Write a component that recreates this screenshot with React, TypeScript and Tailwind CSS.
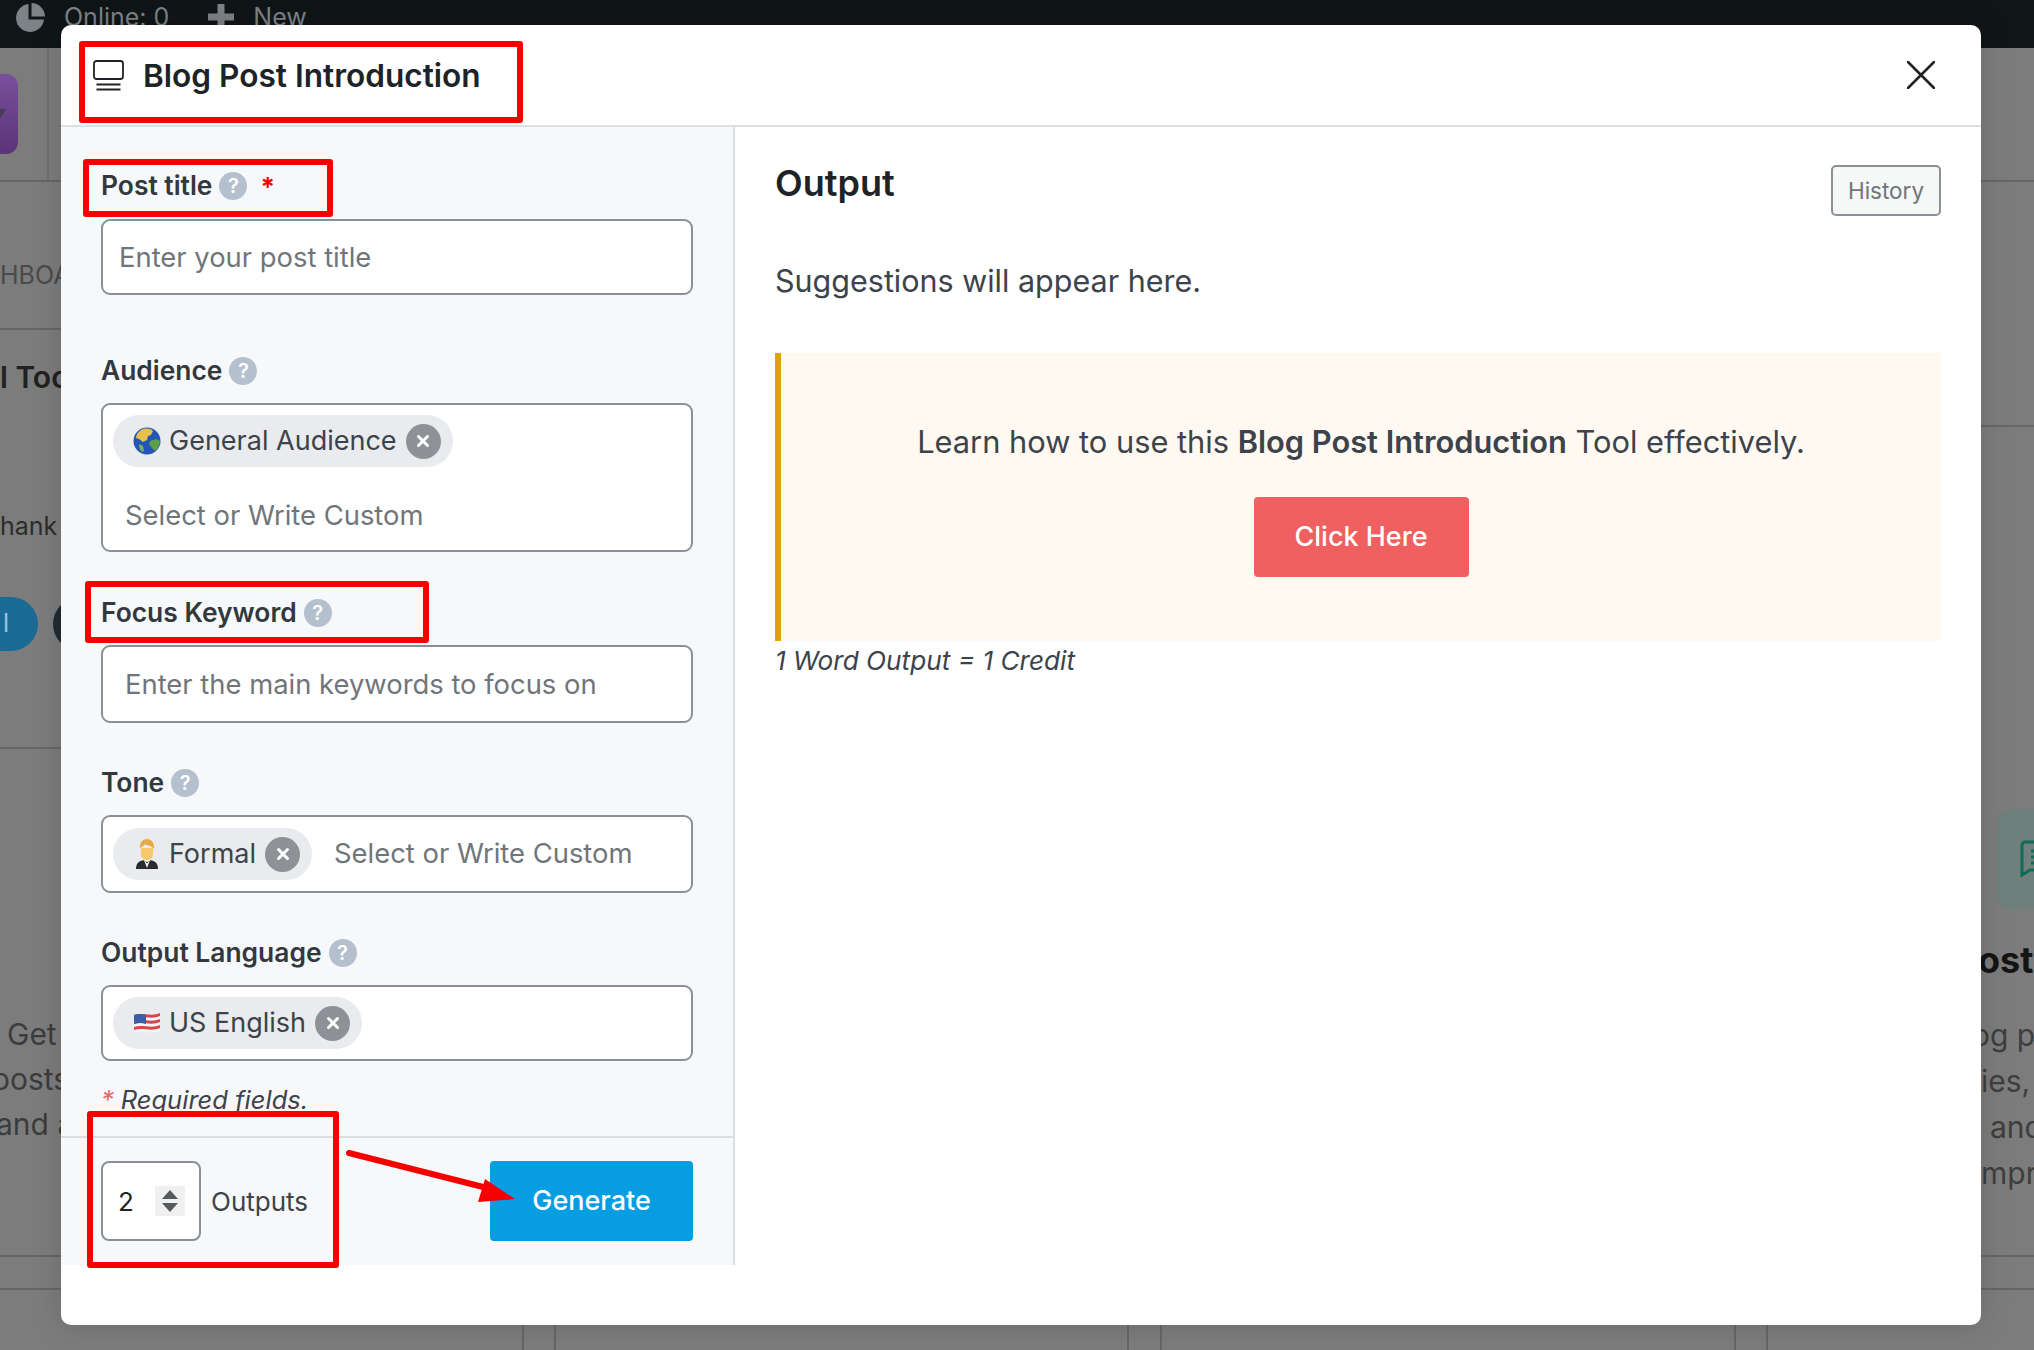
import React from "react";

const Help = () => (
  <span className="flex h-7 w-7 shrink-0 items-center justify-center rounded-full bg-[#b4c0cd] text-[20px] font-semibold text-white">
    ?
  </span>
);

const FieldLabel: React.FC<{ text: string; required?: boolean }> = ({ text, required }) => (
  <div className="flex h-7 items-center gap-[7px] text-[26.4px] font-semibold text-[#32383e]">
    <span>{text}</span>
    <Help />
    {required && <span className="ml-[6px] text-[26px] font-bold text-[#f00000]">*</span>}
  </div>
);

const Globe = () => (
  <svg viewBox="0 0 28 28" className="h-[28px] w-[28px] shrink-0">
    <circle cx="14" cy="14" r="13.5" fill="#2456b8" />
    <path d="M8 3c4-2 9-2 12 1l-2 4-3 1-1 4-4 2-4-3-3-1c0-3 2-6 5-8z" fill="#e3c14b" />
    <path d="M17 14l6-2 4 2c0 4-2 8-5 10l-3-3-3-4z" fill="#5aa04a" />
    <path d="M6 17l4 2 1 5-2 1c-2-2-3-5-3-8z" fill="#7ab356" />
  </svg>
);

const Man = () => (
  <svg viewBox="0 0 22 30" className="h-[30px] w-[22px] shrink-0">
    <path d="M0 30c0-6 3-9 11-9s11 3 11 9z" fill="#2b2b2b" />
    <path d="M8 21h6l-3 8z" fill="#fff" />
    <path d="M9 22l2 1 2-1-2 2.500z" fill="#222" />
    <path d="M5 9h12v6c0 4-3 6-6 6s-6-2-6-6z" fill="#f9c86a" />
    <path d="M4 10c-1-6 3-10 7-10s8 4 7 10l-2-2c-2-2-5-1-7-3-1 2-4 2-5 5z" fill="#e9a93c" />
  </svg>
);

const Flag = () => (
  <svg viewBox="0 0 26 24" className="h-[24px] w-[26px] shrink-0">
    <path d="M0 4c8-3 17 2 26-2v18c-9 4-18-1-26 2z" fill="#f3f3f3" />
    <path d="M0 4c8-3 17 2 26-2v3c-9 4-18-1-26 2zM0 10c8-3 17 2 26-2v3c-9 4-18-1-26 2zM0 16c8-3 17 2 26-2v3c-9 4-18-1-26 2z" fill="#d8454b" />
    <path d="M0 4c4-1.500 8-1 12 0v9c-4-1-8-1.500-12 0z" fill="#3a5da8" />
  </svg>
);

const Chip: React.FC<{ icon: React.ReactNode; text: string }> = ({ icon, text }) => (
  <div className="flex h-[52px] shrink-0 items-center rounded-full bg-[#e9ebee] pr-[12px]">
    <span className="flex w-[56px] shrink-0 justify-center pl-[11px]">{icon}</span>
    <span className="pt-[1px] text-[27px] text-[#3c434a]">{text}</span>
    <span className="ml-[9px] flex h-[35px] w-[35px] items-center justify-center rounded-full bg-[#8e9196]">
      <svg viewBox="0 0 16 16" className="h-4 w-4" fill="none" stroke="#fff" strokeWidth="3" strokeLinecap="round">
        <path d="M3.500 3.500l9 9M12.500 3.500l-9 9" />
      </svg>
    </span>
  </div>
);

const RedBox: React.FC<{ className: string }> = ({ className }) => (
  <div className={`pointer-events-none absolute rounded-[3px] border-[6px] border-[#f60000] ${className}`} />
);

const boxClass = "w-[592px] rounded-[9px] border-2 border-[#8c8f94] bg-white";
const placeholderClass = "text-[27.4px] text-[#70757a]";

export default function App() {
  return (
    <div className="relative flex h-[1350px] w-full flex-col overflow-hidden bg-[#7c7c7c] font-[Inter,sans-serif]">
      {/* admin bar behind the modal */}
      <div className="flex h-12 shrink-0 items-start bg-[#101517] pl-[15px] pt-[3px] text-[25px] leading-[28px] text-[#7d8286]">
        <svg viewBox="0 0 30 30" className="h-[30px] w-[30px]" fill="#7d8286">
          <path d="M13.500 1A14 14 0 1 0 29 16.500H13.500z" />
          <path d="M16.500 0A14 14 0 0 1 30 13.500H16.500z" />
        </svg>
        <span className="ml-[19px]">Online: 0</span>
        <svg viewBox="0 0 28 28" className="ml-[38px] h-[28px] w-[28px]" fill="#7d8286">
          <path d="M10.500 1h7v9.500H27v7h-9.500V27h-7v-9.500H1v-7h9.500z" />
        </svg>
        <span className="ml-[18px]">New</span>
      </div>

      <div className="flex h-[1240px] shrink-0 justify-between">
        {/* left edge of the page */}
        <div className="flex w-[61px] flex-col whitespace-nowrap">
          <div className="flex h-[134px] shrink-0 items-center border-b-2 border-[#666]">
            <div className="flex h-[80px] w-[18px] items-center rounded-r-xl bg-gradient-to-b from-[#7a4f9c] to-[#5a3478]">
              <svg viewBox="0 0 6 10" className="h-[10px] w-[6px]" fill="#4a3a58">
                <path d="M0 0h6L0 10z" />
              </svg>
            </div>
            <div className="ml-[29px] h-full w-[2px] bg-[#6e6e6e]" />
          </div>
          <div className="h-[148px] shrink-0 border-b-2 border-[#666] pt-[78px] text-[25px] leading-[30px] text-[#4a4a4a]">HBOARD</div>
          <div className="pt-[29px] text-[30px] font-semibold leading-[36px] text-[#202121]">l Tools</div>
          <div className="pt-[116px] text-[25px] leading-[30px] text-[#2c2c2c]">hank</div>
          <div className="flex items-center pt-[56px]">
            <div className="flex h-[54px] w-[38px] shrink-0 items-center rounded-r-full bg-[#1a6a95] pl-[3px] text-[25px] text-[#9fc4d8]">l</div>
            <div className="ml-[15px] h-[54px] w-[54px] shrink-0 rounded-full bg-[#1f2a30]" />
          </div>
          <div className="mt-[96px] h-[2px] w-full bg-[#666]" />
          <div className="pt-[263px] pl-[7px] text-[30px] leading-[45px] text-[#3c3c3c]">Get</div>
          <div className="-ml-[8px] text-[30px] leading-[45px] text-[#3c3c3c]">oosts</div>
          <div className="-ml-[4px] text-[30px] leading-[45px] text-[#3c3c3c]">and a</div>
          <div className="mt-[108px] h-[2px] w-full bg-[#666]" />
        </div>

        {/* right edge of the page */}
        <div className="flex w-[53px] flex-col whitespace-nowrap">
          <div className="h-[134px] shrink-0 border-b-2 border-[#666]" />
          <div className="h-[245px] shrink-0 border-b-2 border-[#666]" />
          <div className="ml-[16px] mt-[382px] flex h-[100px] w-[60px] shrink-0 items-center rounded-l-[14px] bg-[#6f7f7b] pl-[23px]">
            <svg viewBox="0 0 30 38" className="h-[38px] w-[30px] shrink-0" fill="none" stroke="#0f6a58" strokeWidth="3">
              <path d="M30 2H5a3 3 0 0 0-3 3v30l8-5h20" />
              <path d="M11 11h19M11 17h19M11 23h19" />
            </svg>
          </div>
          <div className="-ml-[3px] mt-[33px] text-[36px] font-bold leading-[36px] text-[#141414]">ost</div>
          <div className="-ml-[9px] mt-[34px] text-[30px] leading-[46px] text-[#3e3e3e]">og p</div>
          <div className="text-[30px] leading-[46px] text-[#3e3e3e]">ies,</div>
          <div className="pl-[9px] text-[30px] leading-[46px] text-[#3e3e3e]">and</div>
          <div className="text-[30px] leading-[46px] text-[#3e3e3e]">mpr</div>
          <div className="mt-[59px] h-[2px] w-full bg-[#666]" />
        </div>
      </div>

      {/* bottom row of cards */}
      <div className="flex flex-1 border-t-2 border-[#666]">
        <div className="w-[524px] border-r-2 border-[#666]" />
        <div className="w-[32px] border-r-2 border-[#666]" />
        <div className="w-[573px] border-r-2 border-[#666]" />
        <div className="w-[33px] border-r-2 border-[#666]" />
        <div className="w-[574px] border-r-2 border-[#666]" />
        <div className="w-[32px] border-r-2 border-[#666]" />
      </div>

      {/* modal */}
      <div className="absolute left-[61px] top-[25px] flex h-[1300px] w-[1920px] flex-col rounded-[10px] bg-white pb-[60px] shadow-[0_0_30px_rgba(0,0,0,0.15)]">
        <div className="flex h-[102px] shrink-0 items-center justify-between border-b-2 border-[#dcdfe1] pl-[32px] pr-[46px]">
          <div className="flex items-center gap-[19px] pt-[2px]">
            <svg viewBox="0 0 31 31" className="h-[31px] w-[31px]" fill="none" stroke="#1e2327" strokeWidth="1.800">
              <rect x="1" y="1" width="29" height="18" rx="2.500" />
              <path d="M3.500 24.500h24M3.500 29.500h24" />
            </svg>
            <span className="text-[31.6px] font-semibold text-[#1d2327]">Blog Post Introduction</span>
          </div>
          <svg viewBox="0 0 28 28" className="h-[28px] w-[28px]" fill="none" stroke="#222" strokeWidth="2.600" strokeLinecap="round">
            <path d="M1 1l26 26M27 1L1 27" />
          </svg>
        </div>

        <div className="flex min-h-0 flex-1">
          {/* form column */}
          <div className="flex w-[674px] shrink-0 flex-col border-r-2 border-[#dcdfe1] bg-[#f6f8fa]">
            <div className="flex-1 pl-[40px] pt-[45px]">
              <FieldLabel text="Post title" required />
              <div className={`mt-[19px] flex h-[76px] items-center pl-[16px] pt-[1px] ${boxClass}`}>
                <span className={placeholderClass}>Enter your post title</span>
              </div>

              <div className="mt-[62px]"><FieldLabel text="Audience" /></div>
              <div className={`mt-[18px] h-[149px] px-[10px] pt-[10px] ${boxClass}`}>
                <div className="flex"><Chip icon={<Globe />} text="General Audience" /></div>
                <div className={`mt-[31px] pl-[12px] leading-[34px] ${placeholderClass}`}>Select or Write Custom</div>
              </div>

              <div className="mt-[47px]"><FieldLabel text="Focus Keyword" /></div>
              <div className={`mt-[18px] flex h-[78px] items-center pl-[22px] pt-[2px] ${boxClass}`}>
                <span className={placeholderClass}>Enter the main keywords to focus on</span>
              </div>

              <div className="mt-[46px]"><FieldLabel text="Tone" /></div>
              <div className={`mt-[18px] flex h-[78px] items-center pl-[10px] ${boxClass}`}>
                <Chip icon={<Man />} text="Formal" />
                <span className={`ml-[22px] ${placeholderClass}`}>Select or Write Custom</span>
              </div>

              <div className="mt-[46px]"><FieldLabel text="Output Language" /></div>
              <div className={`mt-[18px] flex h-[76px] items-center pl-[10px] ${boxClass}`}>
                <Chip icon={<Flag />} text="US English" />
              </div>

              <div className="mt-[23px] flex items-baseline text-[25.5px] italic leading-[32px] text-[#3c434a]">
                <span className="mr-[7px] text-[#e26a6a]">*</span>
                <span>Required fields.</span>
              </div>
            </div>

            <div className="flex h-[129px] shrink-0 items-start justify-between border-t-2 border-[#dcdfe1] pl-[40px] pr-[40px] pt-[23px]">
              <div className="flex items-center">
                <div className="flex h-[80px] w-[100px] items-center rounded-[8px] border-2 border-[#8c8f94] bg-white pl-[15px] pr-[14px]">
                  <span className="flex-1 text-[26px] text-[#1d2327]">2</span>
                  <svg viewBox="0 0 30 30" className="h-[30px] w-[30px] bg-[#f0f0f0]" fill="#555a5f">
                    <path d="M15 4l8 9H7zM15 26l-8-9h16z" />
                  </svg>
                </div>
                <span className="ml-[10px] text-[26px] text-[#3c434a]">Outputs</span>
              </div>
              <div className="flex h-[80px] w-[203px] items-center justify-center rounded-[4px] bg-[#069de3] pt-[1px] text-[27px] font-medium text-white">
                Generate
              </div>
            </div>
          </div>

          {/* output column */}
          <div className="flex-1 pl-[40px] pr-[40px]">
            <div className="flex items-start justify-between pt-[38px]">
              <span className="text-[36px] font-semibold leading-[36px] text-[#1d2327]">Output</span>
              <div className="flex h-[51px] w-[110px] items-center justify-center rounded-[5px] border-2 border-[#8c8f94] bg-[#f6f7f7] pt-[1px] text-[22.5px] text-[#70757a]">
                History
              </div>
            </div>
            <div className="mt-[45px] text-[30.5px] leading-[40px] text-[#3c434a]">Suggestions will appear here.</div>
            <div className="mt-[52px] flex h-[288px] flex-col items-center border-l-[6px] border-[#e09e10] bg-[#fff9f2] pt-[70px]">
              <div className="text-[30.8px] leading-[38px] text-[#3c434a]">
                Learn how to use this <span className="font-semibold">Blog Post Introduction</span> Tool effectively.
              </div>
              <div className="mt-[36px] flex h-[80px] w-[215px] items-center justify-center rounded-[4px] bg-[#f06060] pt-[1px] text-[27px] font-medium text-white">
                Click Here
              </div>
            </div>
            <div className="mt-[3px] text-[26.2px] italic leading-[34px] text-[#3c434a]">1 Word Output = 1 Credit</div>
          </div>
        </div>
      </div>

      {/* red annotations drawn over the screenshot */}
      <RedBox className="left-[79px] top-[41px] h-[82px] w-[444px]" />
      <RedBox className="left-[83px] top-[159px] h-[58px] w-[250px]" />
      <RedBox className="left-[85px] top-[581px] h-[62px] w-[344px]" />
      <RedBox className="left-[87px] top-[1111px] h-[157px] w-[252px]" />
      <svg viewBox="0 0 2034 1350" className="pointer-events-none absolute left-0 top-0 h-[1350px] w-[2034px]">
        <path d="M349 1153L495 1190" stroke="#f60000" strokeWidth="6" strokeLinecap="round" />
        <path d="M485 1179L515 1199L478 1202z" fill="#f60000" />
      </svg>
    </div>
  );
}
